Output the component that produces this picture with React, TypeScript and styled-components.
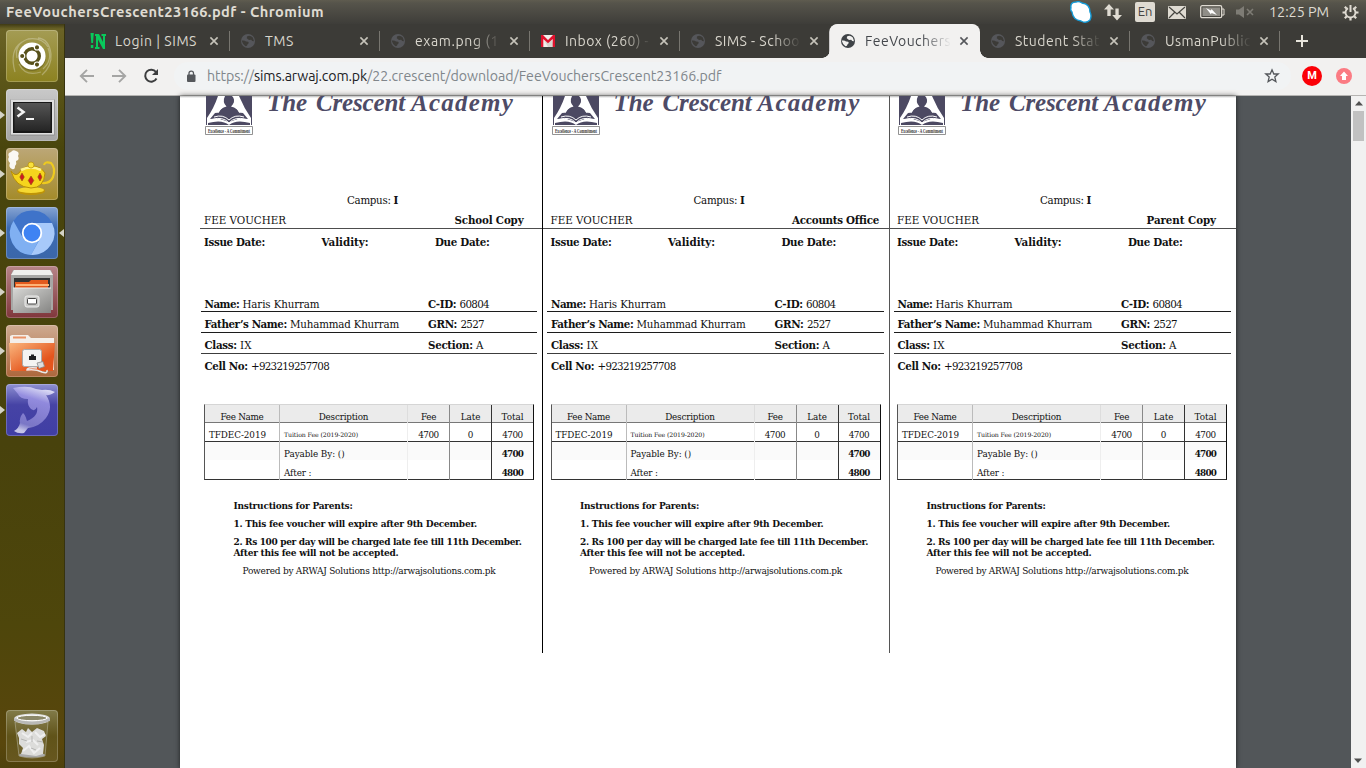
import React, { useLayoutEffect, useRef } from "react";
import styled, { createGlobalStyle, css } from "styled-components";

const Global = createGlobalStyle`
  * { box-sizing: border-box; }
  html, body { margin: 0; padding: 0; }
  body { width: 1366px; height: 768px; overflow: hidden; }
  svg { display: block; flex: none; }
`;

const ui = `"Ubuntu", "Noto Sans", "Open Sans", sans-serif`;
const serif = `"Century Schoolbook L", "DejaVu Serif", serif`;

/* Text run tracked so that it occupies a given width */
const Run = styled.span<{ $bold?: boolean }>`
  display: inline-block;
  white-space: pre;
  font-weight: ${(p) => (p.$bold ? 700 : "inherit")};
`;

function Fit({ w, bold, children }: { w: number; bold?: boolean; children: string }) {
  const ref = useRef<HTMLSpanElement>(null);
  useLayoutEffect(() => {
    const el = ref.current;
    if (!el) return;
    el.style.letterSpacing = "0px";
    const natural = el.getBoundingClientRect().width;
    el.style.letterSpacing = `${(w - natural) / children.length}px`;
  }, [w, children]);
  return (
    <Run ref={ref} $bold={bold}>
      {children}
    </Run>
  );
}

const Desktop = styled.div`
  width: 1366px;
  height: 768px;
  display: flex;
  flex-direction: column;
  overflow: hidden;
  font-family: ${ui};
`;

/* ---------- top panel ---------- */
const Panel = styled.header`
  height: 24px;
  flex: none;
  display: flex;
  align-items: center;
  padding: 0 7px 0 6px;
  color: #dfdbd2;
  background: linear-gradient(#5f5c4f 0, #56544b 3px, #3e3d39 100%);
`;
const Title = styled.div`
  font-size: 14.6px;
  font-weight: 700;
  line-height: 24px;
  flex: 1;
`;
const Tray = styled.div`
  display: flex;
  align-items: center;
`;
const TrayItem = styled.div<{ $w: number }>`
  width: ${(p) => p.$w}px;
  height: 24px;
  display: flex;
  align-items: center;
`;
const Lang = styled.div`
  width: 20px;
  height: 20px;
  border-radius: 2px;
  background: #dfdbd2;
  color: #454440;
  font-size: 13px;
  line-height: 19px;
  text-align: center;
`;
const Clock = styled.div`
  font-size: 14.4px;
  line-height: 24px;
`;

/* ---------- launcher ---------- */
const Below = styled.div`
  flex: 1;
  min-height: 0;
  display: flex;
`;
const Launcher = styled.nav`
  width: 65px;
  flex: none;
  display: flex;
  flex-direction: column;
  justify-content: space-between;
  padding: 6px 0;
  border-right: 1px solid #37330f;
  background: linear-gradient(#3f3a15 0, #6b6326 5px, #5d571a 50px, #49450c 125px, #48420c 420px, #4e460b 600px, #59460c 720px, #4e420d 100%);
`;
const Stack = styled.div`
  display: flex;
  flex-direction: column;
  gap: 7px;
`;
const Slot = styled.div`
  display: flex;
  align-items: center;
  width: 64px;
`;
const Pip = styled.i<{ $right?: boolean; $on?: boolean }>`
  width: 5px;
  height: 0;
  border-top: 4px solid transparent;
  border-bottom: 4px solid transparent;
  margin-right: ${(p) => (p.$right ? 0 : 1)}px;
  margin-left: ${(p) => (p.$right ? 1 : 0)}px;
  ${(p) =>
    p.$on &&
    (p.$right
      ? css`border-right: 5px solid #d4d3c6;`
      : css`border-left: 5px solid #d4d3c6;`)}
`;
const Tile = styled.div<{ $bg: string }>`
  width: 52px;
  height: 52px;
  border-radius: 4px;
  overflow: hidden;
  background: ${(p) => p.$bg};
  box-shadow: inset 0 0 0 1px rgba(255, 255, 255, 0.22);
`;

/* ---------- browser ---------- */
const Browser = styled.main`
  flex: 1;
  min-width: 0;
  display: flex;
  flex-direction: column;
`;
const Tabs = styled.div`
  height: 34px;
  flex: none;
  display: flex;
  background: #3c3b37;
  padding-left: 15px;
`;
const Tab = styled.div<{ $active?: boolean }>`
  width: 150px;
  height: 34px;
  flex: none;
  display: flex;
  align-items: center;
  padding-left: 10px;
  position: relative;
  color: ${(p) => (p.$active ? "#45484d" : "#d9d6cd")};
  font-size: 14px;
  ${(p) =>
    p.$active &&
    css`
      background: #f2f1f0;
      border-radius: 8px 8px 0 0;
      box-shadow: -1px 0 0 -0.2px #f2f1f0;
      &::before,
      &::after {
        content: "";
        position: absolute;
        bottom: 0;
        width: 8px;
        height: 8px;
      }
      &::before {
        left: -8px;
        background: radial-gradient(circle at 0 0, transparent 7.5px, #f2f1f0 8px);
      }
      &::after {
        right: -8px;
        background: radial-gradient(circle at 100% 0, transparent 7.5px, #f2f1f0 8px);
      }
    `}
`;
const TabIcon = styled.div`
  width: 25px;
  flex: none;
`;
const TabText = styled.div<{ $fade?: boolean }>`
  width: 86px;
  white-space: pre;
  line-height: 20px;
  ${(p) => p.$fade && css`mask-image: linear-gradient(90deg, #000 57px, transparent 86px);`}
`;
const CloseBox = styled.div`
  margin-left: 8px;
`;
const Divider = styled.i`
  width: 1px;
  height: 20px;
  margin-left: auto;
  background: #77756f;
`;
const NewTab = styled.div`
  display: flex;
  align-items: center;
  padding-left: 15px;
`;
const Toolbar = styled.div`
  height: 38px;
  flex: none;
  display: flex;
  align-items: center;
  background: #f2f1f0;
  border-bottom: 1px solid #b5b4b2;
  padding: 0 13px 1px 13px;
`;
const NavButton = styled.div`
  width: 32px;
  display: flex;
`;
const Omnibox = styled.div`
  width: 1117px;
  height: 28px;
  border-radius: 14px;
  background: #f1f3f4;
  display: flex;
  align-items: center;
  padding: 0 11px 0 12px;
  font-size: 14.2px;
  color: #80868b;
`;
const Url = styled.div`
  flex: 1;
  margin-left: 11px;
  line-height: 20px;
  white-space: nowrap;
`;
const Host = styled.span`
  color: #202124;
`;
const Avatar = styled.div`
  width: 20px;
  height: 20px;
  margin-left: 11px;
  border-radius: 50%;
  background: #fb0007;
  color: #fff;
  font: 700 11px/20px Roboto, sans-serif;
  text-align: center;
`;
const Update = styled.div`
  margin-left: 14px;
`;

/* ---------- PDF view ---------- */
const Viewer = styled.div`
  flex: 1;
  min-height: 0;
  display: flex;
  background: #525659;
`;
const Gutter = styled.div`
  width: 115px;
  flex: none;
`;
const Page = styled.div`
  width: 1056px;
  flex: none;
  display: flex;
  align-items: flex-start;
  padding-left: 16.5px;
  background: linear-gradient(#b9b9b9, #fff 2px);
  box-shadow: 0 0 5px rgba(0, 0, 0, 0.65);
  font-family: ${serif};
  font-size: 10.3px;
  color: #111;
`;
const Voucher = styled.section<{ $rule: string }>`
  width: 346.5px;
  height: 556.5px;
  flex: none;
  border-right: ${(p) => p.$rule};
`;
const Brand = styled.div`
  height: 94px;
  display: flex;
  padding-left: 8.5px;
  overflow: hidden;
`;
const School = styled.div`
  margin: -9px 0 0 14px;
  font: italic 700 25px/32px "Liberation Serif", serif;
  color: #4e4b66;
  display: flex;
`;
const Word = styled.span<{ $gap?: number }>`
  margin-left: ${(p) => p.$gap || 0}px;
`;
const Campus = styled.div`
  height: 20px;
  line-height: 20px;
  padding-left: 150.5px;
`;
const Heading = styled.div<{ $first: boolean }>`
  height: 18.5px;
  line-height: 20px;
  display: flex;
  justify-content: space-between;
  margin-left: ${(p) => (p.$first ? 3.5 : 0)}px;
  padding-left: ${(p) => (p.$first ? 4 : 7.5)}px;
  padding-right: 9px;
  border-bottom: 1.4px solid #4d4d4d;
`;
const Copy = styled.span<{ $pad: number }>`
  padding-right: ${(p) => p.$pad}px;
`;
const Dates = styled.div`
  display: grid;
  grid-template-columns: 117.5px 113.5px 1fr;
  padding-left: 7.5px;
  height: 45.7px;
  padding-top: 4px;
  line-height: 18px;
`;
const Field = styled.div<{ $h: number; $line?: string }>`
  display: grid;
  grid-template-columns: 223.5px 1fr;
  align-items: end;
  height: ${(p) => p.$h}px;
  line-height: 14px;
  margin: 0 5px 0 4px;
  padding: 0 0 0.5px 4px;
  border-bottom: 1px solid ${(p) => p.$line || "transparent"};
`;
const Table = styled.div`
  margin: 29px 0 0 7.5px;
  width: 330px;
  border: 1px solid #555;
  border-top-color: #d5d5d5;
  border-right-color: #111;
  border-bottom-color: #333;
  font-size: 8.8px;
`;
const Line = styled.div<{ $bg: string; $rule: string }>`
  display: grid;
  grid-template-columns: 75px 128px 42px 42px 1fr;
  height: 18.8px;
  background: ${(p) => p.$bg};
  border-bottom: ${(p) => p.$rule};
  &:last-child { border-bottom: 0; height: 18px; }
`;
const Cell = styled.div<{ $left?: boolean; $edge?: string; $small?: boolean }>`
  padding: ${(p) => (p.$left ? "5px 0 0 4px" : "5px 0 0")};
  line-height: 14px;
  text-align: ${(p) => (p.$left ? "left" : "center")};
  border-right: ${(p) => (p.$edge ? `1px solid ${p.$edge}` : "0")};
  font-size: ${(p) => (p.$small ? 6.2 : 8.8)}px;
`;
const Notes = styled.div`
  padding: 17px 0 0 37px;
  font-size: 9px;
  line-height: 18px;
`;
const Tight = styled.div`
  line-height: 11px;
  margin-top: -3.5px;
`;
const Powered = styled.div`
  padding-left: 9px;
  margin-top: 3.5px;
`;
const Scroll = styled.div`
  width: 15px;
  margin-left: auto;
  background: #f1f1f1;
  display: flex;
  flex-direction: column;
  align-items: center;
`;
const Thumb = styled.div`
  width: 11px;
  height: 30px;
  background: #c1c1c1;
  margin-bottom: auto;
`;
const ScrollArrow = styled.div<{ $down?: boolean }>`
  width: 15px;
  height: 15px;
  display: grid;
  place-items: center;
  transform: ${(p) => (p.$down ? "rotate(180deg)" : "none")};
`;

/* ---------- drawings ---------- */
const Globe = ({ active }: { active?: boolean }) => (
  <svg width="16" height="16" viewBox="0 0 16 16">
    <circle cx="8" cy="8" r="7" fill={active ? "#3f4347" : "#55565a"} />
    <path
      d="M1.8 7.6Q5 7.2 6 8.6Q8.6 8.5 8.9 10L7.6 11.2Q7.3 13 5.5 13.2Q3 12 1.8 8ZM7 3.4Q10 1.6 12.6 4.3Q13.6 6.3 14 8.3L12.2 8L11.2 6.8L9 7L6.8 5.3Z"
      fill={active ? "#f2f1f0" : "#3c3b37"}
    />
  </svg>
);

const NIcon = () => (
  <svg width="16" height="16" viewBox="0 0 16 16">
    <path d="M.5 0H3.8L3 10H1.3ZM.8 12H3.3V15H.8ZM5 1H9L13 9V3H11.5V1H16V3H15V16H13L8 6.5V14H9.5V16H5V14H6V3H5Z" fill="#08c95b" />
  </svg>
);

const Gmail = () => (
  <svg width="16" height="16" viewBox="0 0 16 16">
    <path d="M1 2H15V14H1Z" fill="#f1efeb" />
    <path d="M4 7L8 10L12 7L14 14H8Z" fill="#d8d4cf" />
    <path d="M1 14V2H3L8 7L13 2H15V14H12.7V6L8 10.3L3.3 6V14Z" fill="#e0112d" />
  </svg>
);

const Close = ({ active }: { active?: boolean }) => (
  <svg width="10" height="10" viewBox="0 0 10 10">
    <path d="M1.4 1.4L8.6 8.6M8.6 1.4L1.4 8.6" stroke={active ? "#55575b" : "#c6c3ba"} strokeWidth="1.6" />
  </svg>
);

const Crest = () => (
  <svg width="48" height="39" viewBox="0 0 48 39">
    <path d="M1 0H47V29H1Z" fill="#4c4962" />
    <path d="M13 0Q9 12 2 22L2 29H46V22Q39 12 34 0H27Q30 3 28.5 7Q27 10 26 10.5Q34 12 35.5 22L24 26L12 22Q14 12 21.5 10.5Q17 6 20 0Z" fill="#fff" />
    <circle cx="24" cy="5" r="4.7" fill="#4c4962" />
    <path d="M13 21Q14 11 24 11Q34 11 35 21L24 24Z" fill="#4c4962" />
    <path d="M5 23L10 17Q19 16 24 22Q29 16 38 17L43 23Q30 21 24 27Q18 21 5 23Z" fill="#4c4962" />
    <path d="M9 21Q18 18 24 24Q30 18 39 21M7 23.5Q18 20 24 27Q30 20 41 23.5" fill="none" stroke="#fff" />
    <path d="M3 27Q17 23 24 29Q31 23 45 27V29H3Z" fill="#4c4962" />
    <path d="M.5 30.5H47.5V38.5H.5Z" fill="#fff" stroke="#777" strokeWidth=".8" />
    <text x="3" y="36.8" fontFamily="Liberation Serif, serif" fontSize="6.5" fontWeight="700" fill="#333" textLength="42" lengthAdjust="spacingAndGlyphs">
      Excellence - A Commitment
    </text>
  </svg>
);

const Ubuntu = () => (
  <svg width="52" height="52" viewBox="0 0 52 52">
    <g fill="none" stroke="#fff" strokeOpacity=".28" strokeWidth="1.3">
      <path d="M11 28Q8 14 22 9Q36 7 42 17M9 42Q3 20 16 12M42 18Q47 30 37 39M32 8Q43 9 45 24Q46 36 36 45M13 34Q19 47 35 42" />
    </g>
    <circle cx="26" cy="27" r="14" fill="#4b4618" opacity=".35" />
    <circle cx="26" cy="26" r="13.6" fill="#fff" />
    <circle cx="26" cy="26" r="7.3" fill="none" stroke="#57501a" strokeWidth="3.4" />
    <g fill="#57501a" stroke="#fff" strokeWidth="1.1">
      <circle cx="16.2" cy="26" r="2.6" />
      <circle cx="31" cy="17.4" r="2.6" />
      <circle cx="31" cy="34.6" r="2.6" />
    </g>
  </svg>
);

const Terminal = () => (
  <svg width="52" height="52" viewBox="0 0 52 52">
    <defs>
      <linearGradient id="screen" x1="0" y1="0" x2="0" y2="1">
        <stop offset="0" stopColor="#555" />
        <stop offset="1" stopColor="#252525" />
      </linearGradient>
    </defs>
    <rect x="4" y="10" width="45" height="37" rx="1.5" fill="#999" />
    <rect x="5" y="10.5" width="43" height="35" fill="#dedede" />
    <rect x="7" y="13" width="39" height="31" fill="#171717" />
    <rect x="8.5" y="14" width="36" height="28" fill="url(#screen)" />
    <path d="M11.5 18.5L17.5 23L11.5 27.5" fill="none" stroke="#f4f4f4" strokeWidth="2.6" />
    <path d="M20 30H28" stroke="#f4f4f4" strokeWidth="2" />
  </svg>
);

const Lamp = () => (
  <svg width="52" height="52" viewBox="0 0 52 52">
    <path d="M6 21Q2 19 4 15Q1 12 3 9Q1 5 5 4Q7 1 10 3Q14 4 12 8Q14 12 10 13Q11 16 9 18Q9 22 6 21Z" fill="#fff" opacity=".92" />
    <path d="M38 17Q39 13 45 15Q50 20 47 29Q44 36 36 35" fill="none" stroke="#edca20" strokeWidth="2.2" />
    <ellipse cx="25" cy="43" rx="14" ry="4" fill="#bf9406" />
    <ellipse cx="25" cy="42" rx="13" ry="3" fill="#f5d832" />
    <path d="M5 23Q9 29 13 25Q17 18 25 18Q35 18 39 25Q38 40 25 40Q9 39 5 23Z" fill="#f6d51d" stroke="#b98e06" />
    <path d="M15 22Q25 17 35 22" fill="none" stroke="#fff38d" strokeWidth="2.6" />
    <circle cx="25" cy="17" r="3" fill="#f9e13b" stroke="#b98e06" strokeWidth=".7" />
    <g fill="#d11b20" stroke="#91570c" strokeWidth=".6">
      <path d="M16 25L18.3 29L16 33L13.8 29ZM25 28L27.8 32.5L25 37L22.2 32.5ZM34 25L36 29L34 33L31.8 29Z" />
    </g>
  </svg>
);

const ChromiumIcon = () => (
  <svg width="52" height="52" viewBox="0 0 52 52">
    <circle cx="26" cy="26" r="22" fill="#4d87df" />
    <path d="M26 26L7.5 14A22 22 0 0 0 25 48L34 31Z" fill="#80b0f2" />
    <path d="M26 16H46A22 22 0 0 1 25 48L35 30Z" fill="#a7c9fa" />
    <path d="M7.5 14A22 22 0 0 1 46 16H26L17 31Z" fill="#3f73c9" />
    <circle cx="26" cy="26" r="10.2" fill="#fff" />
    <circle cx="26" cy="26" r="8.4" fill="#3f83f3" />
  </svg>
);

const Cabinet = () => (
  <svg width="52" height="52" viewBox="0 0 52 52">
    <defs>
      <linearGradient id="steel" x1="0" y1="0" x2="1" y2="1">
        <stop offset="0" stopColor="#d7d7d5" />
        <stop offset="1" stopColor="#858583" />
      </linearGradient>
    </defs>
    <path d="M7 4H45L47 9V44H5V9Z" fill="#a7a7a5" />
    <path d="M8 4H44L47 9H5Z" fill="#efefed" />
    <path d="M8 12H44V23H8Z" fill="#333" />
    <path d="M9 16H23L25 14H42V23H9Z" fill="#e35a1d" />
    <path d="M10 18H43V20H10Z" fill="#ffb276" />
    <path d="M7 22H45V47H7Z" fill="url(#steel)" />
    <path d="M7 22H45" stroke="#eee" />
    <rect x="19" y="30" width="14" height="11" rx="2" fill="#c8c8c6" stroke="#eee" />
    <rect x="21.5" y="32.5" width="9" height="5.5" rx="1" fill="#fff" stroke="#444" />
  </svg>
);

const NetFolder = () => (
  <svg width="52" height="52" viewBox="0 0 52 52">
    <defs>
      <linearGradient id="folder" x1="0" y1="0" x2="1" y2="1">
        <stop offset="0" stopColor="#fab77f" />
        <stop offset=".7" stopColor="#e4551d" />
      </linearGradient>
    </defs>
    <path d="M4 11L6 10H22L25 13H48V45H4Z" fill="#f4eee9" />
    <path d="M7 12.500H20" stroke="#e99267" strokeWidth="2" />
    <path d="M3 18H49L47 46H5Z" fill="url(#folder)" />
    <rect x="16.500" y="24.500" width="19" height="17" rx="2" fill="#f4f4f2" stroke="#aaa" />
    <path d="M23 35V31H25V29.500H28V31H30V35Z" fill="#222" />
    <path d="M31 43Q21 42 21 45Q30 44 36 47Q42 49 41 45" fill="none" stroke="#e8e8e8" strokeWidth="1.5" />
    <path d="M31 38L37 36.500L38.500 41.500L33 43.500Z" fill="#ddd" stroke="#888" strokeWidth=".8" />
  </svg>
);

const Dolphin = () => (
  <svg width="52" height="52" viewBox="0 0 52 52">
    <defs>
      <linearGradient id="dolphin" x1=".7" y1="0" x2=".4" y2="1">
        <stop offset="0" stopColor="#f5f6ff" />
        <stop offset=".3" stopColor="#9d95e6" />
        <stop offset=".85" stopColor="#8480cc" />
        <stop offset="1" stopColor="#dcdcf4" />
      </linearGradient>
    </defs>
    <path d="M7 4Q22 1 30 5L36 6Q43 5 49 8Q43 12 40 11Q48 23 40 34Q33 43 22 44L18 49Q12 50 8 47Q13 44 14 39Q13 34 17 29Q19 30 21 37Q33 32 31 23Q29 28 25 25Q21 21 22 15Q14 15 12 10Z" fill="url(#dolphin)" opacity=".85" />
  </svg>
);

const Trash = () => (
  <svg width="52" height="52" viewBox="0 0 52 52">
    <path d="M9 12L13 46Q26 50 39 46L42 12Z" fill="#fff" fillOpacity=".08" stroke="#c2c2ad" strokeOpacity=".5" />
    <ellipse cx="26" cy="45" rx="13" ry="2.500" fill="#aaa" />
    <path d="M13 28L11 23L16 19L20 22L22 18L26 22L31 18L38 21L40 26L36 29L38 35L37 44L30 46L15 44L17 38L13 34Z" fill="#dcdcda" />
    <path d="M16 23L22 27L26 23M29 22L34 27L39 24M20 32L27 30L32 35M17 41L23 36L28 43L34 38" fill="none" stroke="#efefef" strokeWidth="2" />
    <path d="M15 29L21 31M26 26V32M31 31L37 32M25 38L30 40" stroke="#b5b5b3" />
    <ellipse cx="26" cy="9" rx="18" ry="5.500" fill="#ddd" />
    <path d="M8 8V11Q26 18 44 11V8Q26 15 8 8Z" fill="#b9b9b7" />
    <ellipse cx="26" cy="8" rx="15" ry="2.700" fill="#8b8768" stroke="#fff" />
  </svg>
);

const tabs = [
  { icon: <NIcon />, text: "Login | SIMS", w: 82 },
  { icon: <Globe />, text: "TMS", w: 29 },
  { icon: <Globe />, text: "exam.png (1", w: 84, fade: true },
  { icon: <Gmail />, text: "Inbox (260) -", w: 84, fade: true },
  { icon: <Globe />, text: "SIMS - Schoo", w: 85, fade: true },
  { icon: <Globe active />, text: "FeeVouchers", w: 86, fade: true, active: true },
  { icon: <Globe />, text: "Student Stat", w: 85, fade: true },
  { icon: <Globe />, text: "UsmanPublic", w: 86, fade: true },
];

const apps = [
  { icon: <Ubuntu />, bg: "linear-gradient(#a49c54, #8c8220)" },
  { icon: <Terminal />, bg: "linear-gradient(#c9c9c9, #a5a5a5)", left: true },
  { icon: <Lamp />, bg: "linear-gradient(#bca777, #a48b29)", left: true },
  { icon: <ChromiumIcon />, bg: "linear-gradient(#86a4d3, #3c6bb3 40%, #3b67a9)", left: true, right: true },
  { icon: <Cabinet />, bg: "linear-gradient(#b78488, #80363b)", left: true },
  { icon: <NetFolder />, bg: "linear-gradient(#ceaa91, #ad673c)", left: true },
  { icon: <Dolphin />, bg: "linear-gradient(#8f91d2, #4643a5 40%, #403ea4)", left: true },
];

const copies = [
  { name: "School Copy", w: 69, pad: 9.5, rule: "1.4px solid #000" },
  { name: "Accounts Office", w: 86.5, pad: 0.5, rule: "1.4px solid #555" },
  { name: "Parent Copy", w: 69.5, pad: 11, rule: "0 none" },
];

function Slip({ index }: { index: number }) {
  const c = copies[index];
  return (
    <Voucher $rule={c.rule}>
      <Brand>
        <Crest />
        <School>
          <Word><Fit w={40}>The</Fit></Word>
          <Word $gap={9}><Fit w={89}>Crescent</Fit></Word>
          <Word $gap={6}><Fit w={103}>Academy</Fit></Word>
        </School>
      </Brand>
      <Campus><Fit w={46.5}>Campus: </Fit><Fit w={6} bold>I</Fit></Campus>
      <Heading $first={index === 0}>
        <span><Fit w={82}>FEE VOUCHER</Fit></span>
        <Copy $pad={c.pad}><Fit w={c.w} bold>{c.name}</Fit></Copy>
      </Heading>
      <Dates>
        <span><Fit w={61} bold>Issue Date:</Fit></span>
        <span><Fit w={47} bold>Validity:</Fit></span>
        <span><Fit w={54.5} bold>Due Date:</Fit></span>
      </Dates>
      <Field $h={38} $line="#1c1c1c">
        <span><Fit w={38} bold>Name: </Fit><Fit w={77}>Haris Khurram</Fit></span>
        <span><Fit w={31.5} bold>C-ID: </Fit><Fit w={29.5}>60804</Fit></span>
      </Field>
      <Field $h={20.7} $line="#1c1c1c">
        <span><Fit w={85.5} bold>Father’s Name: </Fit><Fit w={109}>Muhammad Khurram</Fit></span>
        <span><Fit w={32.5} bold>GRN: </Fit><Fit w={23.5}>2527</Fit></span>
      </Field>
      <Field $h={20.8} $line="#3c3c3c">
        <span><Fit w={35.5} bold>Class: </Fit><Fit w={12}>IX</Fit></span>
        <span><Fit w={48} bold>Section: </Fit><Fit w={8}>A</Fit></span>
      </Field>
      <Field $h={21}>
        <span><Fit w={46.5} bold>Cell No: </Fit><Fit w={78}>+923219257708</Fit></span>
      </Field>
      <Table>
        <Line $bg="#ebebeb" $rule="1px solid #777">
          <Cell $edge="#bbb"><Fit w={43}>Fee Name</Fit></Cell>
          <Cell $edge="#ddd"><Fit w={49.5}>Description</Fit></Cell>
          <Cell $edge="#888"><Fit w={15}>Fee</Fit></Cell>
          <Cell $edge="#333"><Fit w={19.5}>Late</Fit></Cell>
          <Cell><Fit w={22}>Total</Fit></Cell>
        </Line>
        <Line $bg="#fff" $rule="1px solid #333">
          <Cell $left $edge="#bbb"><Fit w={57}>TFDEC-2019</Fit></Cell>
          <Cell $left $small $edge="#eee"><Fit w={74}>Tuition Fee (2019-2020)</Fit></Cell>
          <Cell $edge="#888"><Fit w={20.5}>4700</Fit></Cell>
          <Cell $edge="#333"><Fit w={5.5}>0</Fit></Cell>
          <Cell><Fit w={20.5}>4700</Fit></Cell>
        </Line>
        <Line $bg="#fafafa" $rule="1px solid #fff">
          <Cell $edge="#bbb" />
          <Cell $left $edge="#eee"><Fit w={60.5}>Payable By: ()</Fit></Cell>
          <Cell $edge="#888" />
          <Cell $edge="#333" />
          <Cell><Fit w={21.5} bold>4700</Fit></Cell>
        </Line>
        <Line $bg="#fff" $rule="0">
          <Cell $edge="#bbb" />
          <Cell $left $edge="#eee"><Fit w={27.5}>After :</Fit></Cell>
          <Cell $edge="#888" />
          <Cell $edge="#333" />
          <Cell><Fit w={21.5} bold>4800</Fit></Cell>
        </Line>
      </Table>
      <Notes>
        <div><Fit w={119} bold>Instructions for Parents:</Fit></div>
        <div><Fit w={243.5} bold>1. This fee voucher will expire after 9th December.</Fit></div>
        <div><Fit w={288} bold>2. Rs 100 per day will be charged late fee till 11th December.</Fit></div>
        <Tight><Fit w={165} bold>After this fee will not be accepted.</Fit></Tight>
        <Powered><Fit w={253}>Powered by ARWAJ Solutions http://arwajsolutions.com.pk</Fit></Powered>
      </Notes>
    </Voucher>
  );
}

export default function App() {
  return (
    <Desktop>
      <Global />
      <Panel>
        <Title><Fit w={318}>FeeVouchersCrescent23166.pdf - Chromium</Fit></Title>
        <Tray>
          <TrayItem $w={34}>
            <svg width="22" height="22" viewBox="0 0 22 22">
              <path d="M1 7Q0 1 6 1Q9 0 12 2Q20 3 20 11Q22 15 20 19Q16 23 11 20Q3 19 2 11Q0 9 1 7Z" fill="#fff" stroke="#159bd7" strokeWidth="1.4" />
            </svg>
          </TrayItem>
          <TrayItem $w={31}>
            <svg width="18" height="17" viewBox="0 0 18 17">
              <path d="M5 0L10 5.5H6.7V12H3.3V5.5H0ZM13 16.5L8.2 11H11.4V4.5H14.7V11H18Z" fill="#dfdbd2" />
            </svg>
          </TrayItem>
          <TrayItem $w={33}><Lang>En</Lang></TrayItem>
          <TrayItem $w={32}>
            <svg width="18" height="13" viewBox="0 0 18 13">
              <rect width="18" height="13" rx="1" fill="#dfdbd2" />
              <path d="M1 1L9 8L17 1M1 12L6.5 6.5M17 12L11.5 6.5" fill="none" stroke="#45443f" strokeWidth="1.2" />
            </svg>
          </TrayItem>
          <TrayItem $w={36}>
            <svg width="25" height="14" viewBox="0 0 25 14">
              <rect x=".7" y=".7" width="21" height="12" rx="1.5" fill="none" stroke="#dfdbd2" strokeWidth="1.3" />
              <rect x="2.5" y="2.5" width="17.5" height="8.5" fill="#908e87" />
              <path d="M22 4H24V10H22" fill="none" stroke="#dfdbd2" />
              <path d="M6 3L11 5.5L11.5 4L17 10L11.5 8L11 9.5Z" fill="#fff" />
            </svg>
          </TrayItem>
          <TrayItem $w={33}>
            <svg width="18" height="14" viewBox="0 0 18 14">
              <path d="M0 4.5H3L8 1V13L3 9.5H0Z" fill="#7e7c75" />
              <path d="M11 4L17 10M17 4L11 10" stroke="#7e7c75" strokeWidth="1.6" />
            </svg>
          </TrayItem>
          <TrayItem $w={73}><Clock><Fit w={60}>12:25 PM</Fit></Clock></TrayItem>
          <TrayItem $w={17}>
            <svg width="17" height="17" viewBox="0 0 17 17">
              <g fill="none" stroke="#dfdbd2">
                <path d="M6 4.2A5 5 0 1 0 11 4.2" strokeWidth="1.9" />
                <path d="M8.5 1V8" strokeWidth="2" />
                <path d="M.5 8.5H3M14 8.5H16.5M2.8 2.8L4.8 4.8M14.2 2.8L12.2 4.8M2.8 14.2L4.8 12.2M14.2 14.2L12.2 12.2M8.5 14V16.5" strokeWidth="2.2" />
              </g>
            </svg>
          </TrayItem>
        </Tray>
      </Panel>
      <Below>
        <Launcher>
          <Stack>
            {apps.map((a, i) => (
              <Slot key={i}>
                <Pip $on={a.left} />
                <Tile $bg={a.bg}>{a.icon}</Tile>
                <Pip $right $on={a.right} />
              </Slot>
            ))}
          </Stack>
          <Slot>
            <Pip />
            <Tile $bg="linear-gradient(#827b49, #605319 50%, #67571f)"><Trash /></Tile>
            <Pip $right />
          </Slot>
        </Launcher>
        <Browser>
          <Tabs>
            {tabs.map((t, i) => (
              <Tab key={t.text} $active={t.active}>
                <TabIcon>{t.icon}</TabIcon>
                <TabText $fade={t.fade}><Fit w={t.w}>{t.text}</Fit></TabText>
                <CloseBox><Close active={t.active} /></CloseBox>
                {i !== 4 && i !== 5 && <Divider />}
              </Tab>
            ))}
            <NewTab>
              <svg width="14" height="14" viewBox="0 0 14 14">
                <path d="M7 1V13M1 7H13" stroke="#e8e5dc" strokeWidth="2" />
              </svg>
            </NewTab>
          </Tabs>
          <Toolbar>
            <NavButton>
              <svg width="18" height="16" viewBox="0 0 18 16"><path d="M16 8H3M9 1.8L2.8 8L9 14.2" fill="none" stroke="#a5a5a4" strokeWidth="1.9" /></svg>
            </NavButton>
            <NavButton>
              <svg width="18" height="16" viewBox="0 0 18 16"><path d="M2 8H15M9 1.8L15.2 8L9 14.2" fill="none" stroke="#a5a5a4" strokeWidth="1.9" /></svg>
            </NavButton>
            <NavButton>
              <svg width="18" height="16" viewBox="-0.5 0 18 16">
                <path d="M13.5 4A6 6 0 1 0 14 10.5" fill="none" stroke="#3c3d3e" strokeWidth="2" />
                <path d="M15.5 1V7H9.5Z" fill="#3c3d3e" />
              </svg>
            </NavButton>
            <Omnibox>
              <svg width="10" height="13" viewBox="0 0 10 13">
                <rect x="1" y="4.5" width="8.500" height="7.500" rx="1" fill="#55585c" />
                <path d="M3 5V3.3Q3 1.2 5.2 1.2Q7.5 1.2 7.5 3.3V5" fill="none" stroke="#55585c" strokeWidth="1.3" />
              </svg>
              <Url>
                <Fit w={47}>https://</Fit>
                <Host><Fit w={113}>sims.arwaj.com.pk</Fit></Host>
                <Fit w={354.5}>/22.crescent/download/FeeVouchersCrescent23166.pdf</Fit>
              </Url>
              <svg width="16" height="16" viewBox="0 0 16 16">
                <path d="M8 1.8L9.8 6H14.2L10.8 9L11.9 13.6L8 11.2L4.1 13.6L5.2 9L1.8 6H6.2Z" fill="none" stroke="#55585c" strokeWidth="1.3" />
              </svg>
            </Omnibox>
            <Avatar>M</Avatar>
            <Update>
              <svg width="16" height="16" viewBox="0 0 16 16">
                <circle cx="8" cy="8" r="8" fill="#fb7b83" />
                <path d="M8 3.5L12 8H10V12H6V8H4Z" fill="#fff" />
              </svg>
            </Update>
          </Toolbar>
          <Viewer>
            <Gutter />
            <Page>
              <Slip index={0} />
              <Slip index={1} />
              <Slip index={2} />
            </Page>
            <Scroll>
              <ScrollArrow><svg width="8" height="5" viewBox="0 0 8 5"><path d="M4 0L8 4.5H0Z" fill="#505050" /></svg></ScrollArrow>
              <Thumb />
              <ScrollArrow $down><svg width="8" height="5" viewBox="0 0 8 5"><path d="M4 0L8 4.5H0Z" fill="#505050" /></svg></ScrollArrow>
            </Scroll>
          </Viewer>
        </Browser>
      </Below>
    </Desktop>
  );
}
